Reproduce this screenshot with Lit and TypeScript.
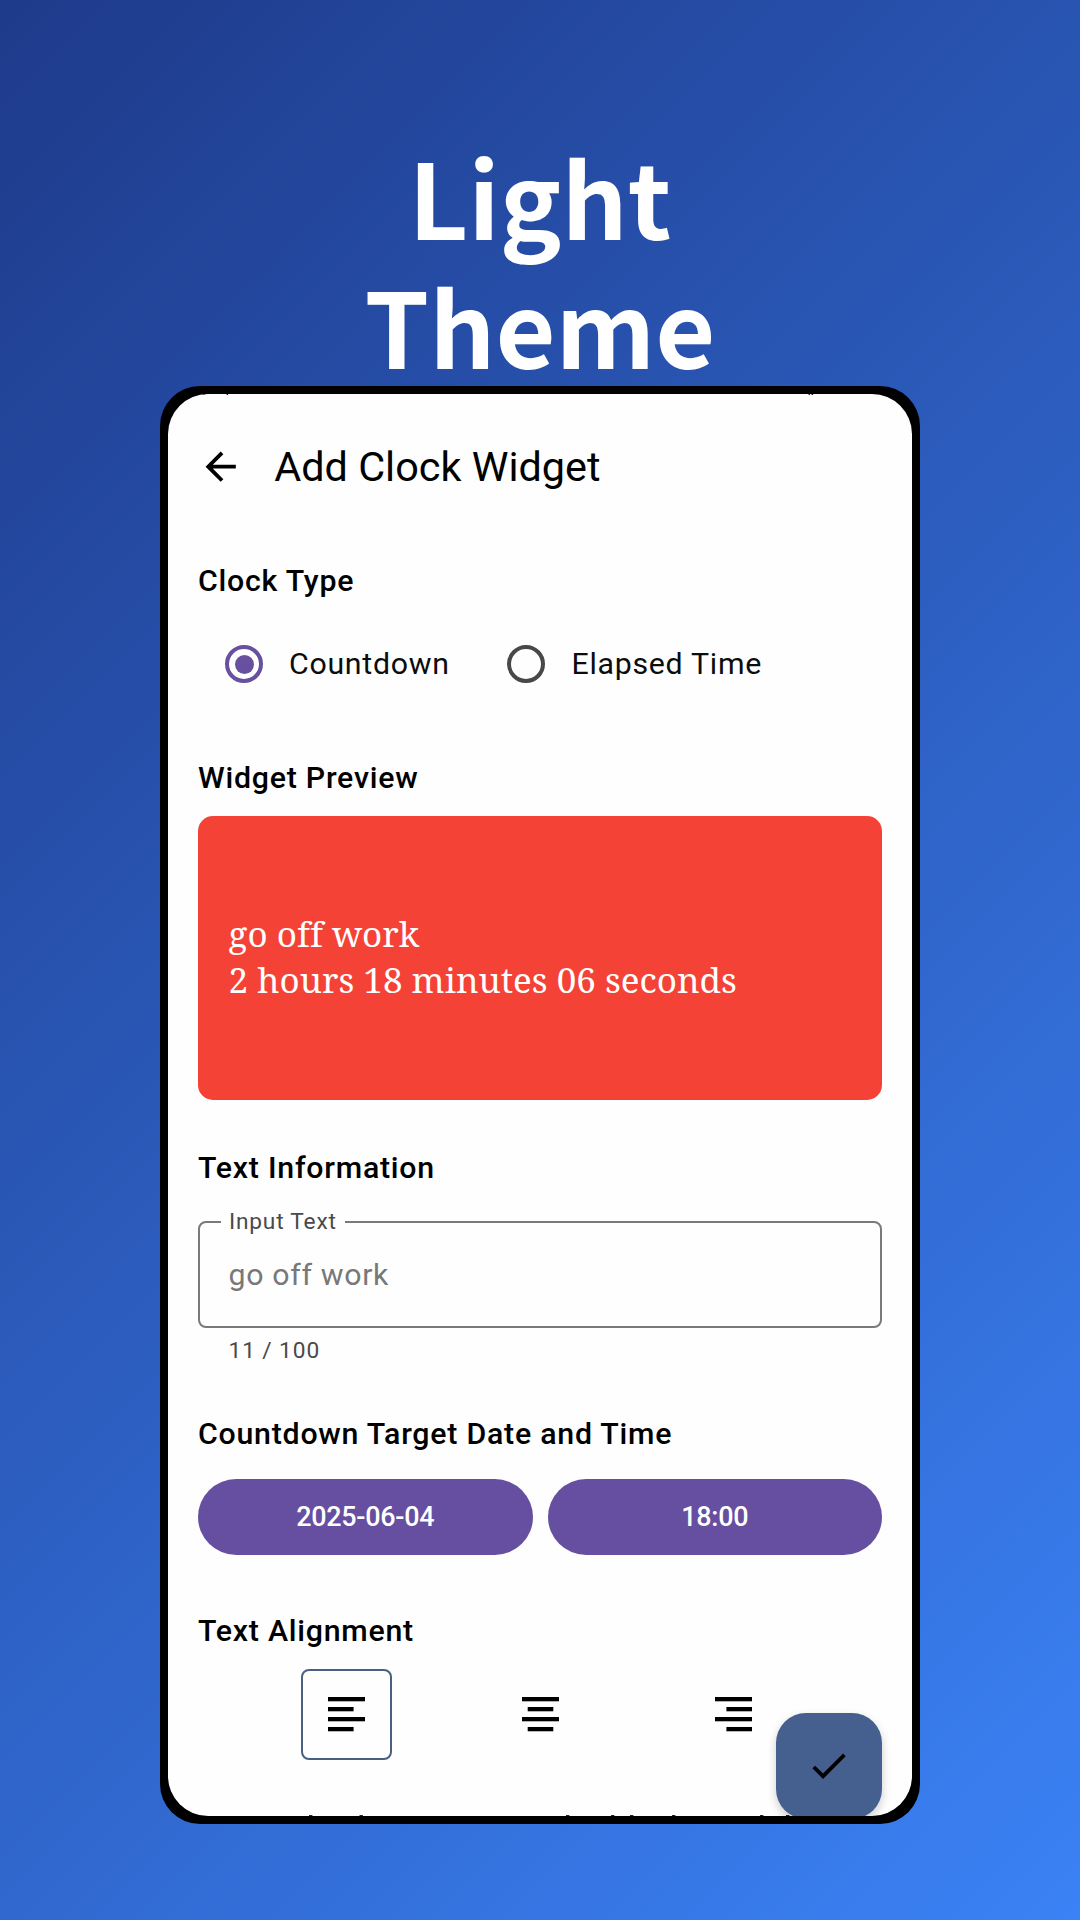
import { LitElement, html, css, svg } from "lit";
import { customElement, property, state } from "lit/decorators.js";
import { classMap } from "lit/directives/class-map.js";

type Align = "left" | "center" | "right";

@customElement("clock-radio")
export class ClockRadio extends LitElement {
  @property() label = "";
  @property({ type: Boolean }) checked = false;

  static styles = css`
    :host { display: flex; align-items: center; gap: 26px; color: #0c0c0c; }
    .ring {
      box-sizing: border-box; width: 38px; height: 38px; border-radius: 50%;
      border: 4px solid #49474a; display: grid; place-items: center;
    }
    .ring.on { border-color: #6750a0; }
    .dot { width: 19px; height: 19px; border-radius: 50%; background: #6750a0; }
    .label { font-size: 30.3px; line-height: 48px; letter-spacing: 0.72px; white-space: nowrap; }
  `;

  render() {
    return html`
      <span class=${classMap({ ring: true, on: this.checked })}>
        ${this.checked ? html`<span class="dot"></span>` : ""}
      </span>
      <span class="label">${this.label}</span>
    `;
  }
}

@customElement("align-button")
export class AlignButton extends LitElement {
  @property() align: Align = "left";
  @property({ type: Boolean }) selected = false;

  static styles = css`
    .box {
      box-sizing: border-box; width: 91px; height: 91px; border-radius: 8px;
      border: 2px solid transparent; display: grid; place-items: center;
    }
    .box.selected { border-color: #4a6080; }
    svg { display: block; }
  `;

  render() {
    const x = { left: 0, center: 5.7, right: 11.4 }[this.align];
    return html`
      <div class=${classMap({ box: true, selected: this.selected })}>
        <svg width="37" height="34.4" viewBox="0 0 37 34.4">
          ${[0, 1, 2, 3].map((i) => svg`
            <rect x=${i % 2 ? x : 0} y=${i * 10} width=${i % 2 ? 25.6 : 37} height="4.3"></rect>`)}
        </svg>
      </div>
    `;
  }
}

@customElement("app-root")
export class AppRoot extends LitElement {
  @state() private text = "go off work";
  @state() private align: Align = "left";

  static styles = css`
    :host { display: block; }
    .page {
      box-sizing: border-box; width: 1080px; height: 1920px; padding-top: 131px;
      overflow: hidden; display: flex; flex-direction: column; align-items: center;
      background: linear-gradient(135deg, #1e3a8a 0%, #3b82f6 100%);
      font-family: Roboto, "Liberation Sans", sans-serif;
    }
    .headline {
      margin: 0; height: 255px; width: 400px; text-align: center; color: #fff;
      font: 700 103.5px/129.4px "Noto Sans CJK SC", "Noto Sans", sans-serif;
    }
    .phone {
      box-sizing: border-box; width: 760px; height: 1438px; padding: 8px;
      border-radius: 40px; background: #000;
    }
    .screen {
      position: relative; box-sizing: border-box; width: 744px; height: 1422px;
      padding: 0 30px; border-radius: 40px; overflow: hidden; background: #fefefe; color: #000;
    }
    .bar { display: flex; align-items: center; height: 146px; gap: 30.8px; }
    .bar svg { flex: none; }
    .title { font-size: 41.4px; line-height: 48px; }
    .section {
      margin: 0; font-size: 30.3px; line-height: 40px; font-weight: 500; letter-spacing: 0.76px;
    }
    .type { margin-top: 21px; }
    .radios { display: flex; gap: 57.8px; margin: 39.2px 0 69.6px; padding-left: 27px; }
    .preview {
      box-sizing: border-box; height: 284.4px; margin: 18px 0 48.3px; padding: 0 30px 1.4px 30.6px;
      border-radius: 15px; background: #f44336; color: #fff;
      display: flex; flex-direction: column; justify-content: center;
      font: 35px/46.2px "Noto Serif", "DejaVu Serif Condensed", serif;
      letter-spacing: 0.01px;
    }
    .field {
      position: relative; box-sizing: border-box; height: 106.6px; margin-top: 33px;
      padding: 0 28.6px; border: 2px solid #7a7a7a; border-radius: 8px;
      display: flex; align-items: center;
    }
    .value { font-size: 30.3px; line-height: 40px; letter-spacing: 0.65px; color: #787878; }
    .label {
      position: absolute; left: 21px; top: -16px; padding: 0 8.5px 0 8px; background: #fefefe;
      font-size: 22.7px; line-height: 30px; letter-spacing: 0.8px; color: #49494b;
    }
    .counter {
      margin: 8.2px 0 47.6px 30.6px; font-size: 22.7px; line-height: 30px;
      letter-spacing: 0.88px; color: #49494b;
    }
    .buttons { display: grid; grid-template-columns: 1fr 1fr; gap: 15px; margin: 25.6px 0 55.6px; }
    .pill {
      box-sizing: border-box; height: 75.7px; border-radius: 38px;
      background: #664fa0; color: #fff; display: grid; place-items: center;
      font-size: 26.9px; font-weight: 500; letter-spacing: -0.25px;
    }
    .aligns { display: flex; justify-content: space-evenly; margin-top: 18.3px; }
    .fab {
      position: absolute; left: 607.6px; top: 1318.5px; width: 106px; height: 106px;
      border-radius: 30px; background: #455f8f; display: grid; place-items: center;
      box-shadow: 0 4px 10px rgba(0, 0, 0, 0.2);
    }
    .edge { position: absolute; left: 0; width: 744px; height: 2px; }
    .edge.top { top: 0; }
    .edge.bottom { bottom: 0; }
  `;

  private marks(where: "top" | "bottom", xs: number[], w: number) {
    return html`<svg class="edge ${where}" viewBox="0 0 744 2">
      ${xs.map((x) => svg`<rect x=${x} y=${where === "top" ? 0 : 1} width=${w} height="1" fill="#222"></rect>`)}
    </svg>`;
  }

  render() {
    const aligns: Align[] = ["left", "center", "right"];
    return html`
      <div class="page">
        <h1 class="headline">Light<br />Theme</h1>
        <div class="phone">
          <div class="screen">
            <header class="bar">
              <svg width="45.4" height="45.4" viewBox="0 0 24 24">
                <path d="M20 11H7.83l5.59-5.59L12 4l-8 8 8 8 1.41-1.41L7.83 13H20v-2z"></path>
              </svg>
              <span class="title">Add Clock Widget</span>
            </header>

            <h2 class="section type">Clock Type</h2>
            <div class="radios">
              <clock-radio label="Countdown" checked></clock-radio>
              <clock-radio label="Elapsed Time"></clock-radio>
            </div>

            <h2 class="section">Widget Preview</h2>
            <div class="preview">
              <span>${this.text}</span>
              <span>2 hours 18 minutes 06 seconds</span>
            </div>

            <h2 class="section">Text Information</h2>
            <div class="field">
              <span class="label">Input Text</span>
              <span class="value">${this.text}</span>
            </div>
            <div class="counter">${this.text.length} / 100</div>

            <h2 class="section">Countdown Target Date and Time</h2>
            <div class="buttons">
              <span class="pill">2025-06-04</span>
              <span class="pill">18:00</span>
            </div>

            <h2 class="section">Text Alignment</h2>
            <div class="aligns">
              ${aligns.map((a) => html`
                <align-button .align=${a} ?selected=${a === this.align}></align-button>`)}
            </div>

            ${this.marks("top", [35, 58.5, 640.5, 643.5], 1.6)}
            ${this.marks("bottom", [141, 191.5, 398, 443, 462, 504, 592, 618], 3.4)}
            <div class="fab">
              <svg width="45.4" height="45.4" viewBox="0 0 24 24">
                <path d="M9 16.17L4.83 12l-1.42 1.41L9 19 21 7l-1.41-1.41z"></path>
              </svg>
            </div>
          </div>
        </div>
      </div>
    `;
  }
}
